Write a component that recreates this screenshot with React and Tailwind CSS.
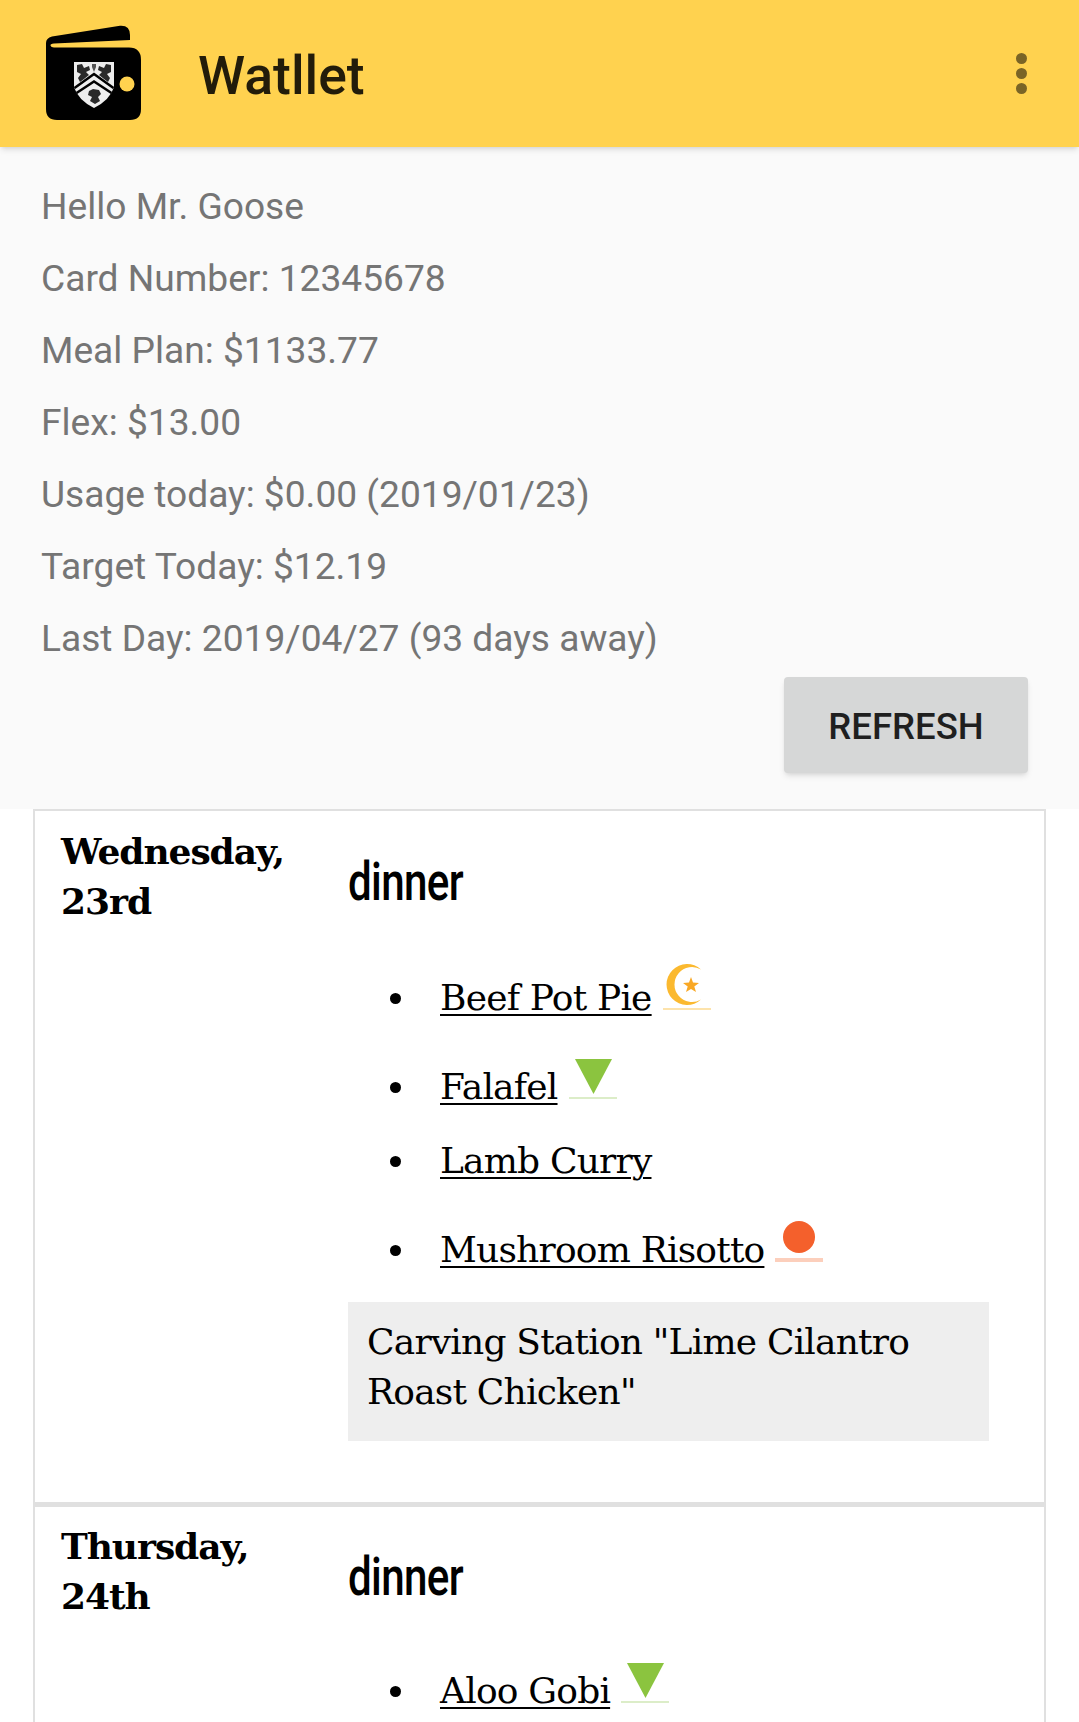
import React from 'react';

const Wallet = () => (
  <svg width="95" height="95" viewBox="0 0 95 95" className="shrink-0 mb-[2px]">
    <path d="M0 18 Q0 13 6 11.500 L74 0.700 Q84 0 84 10 L84 15 L8 18.500 Q4 19 4.500 20.500 Q5 22.500 8 22.500 L83 22.500 Q95 22.500 95 35 L95 84 Q95 95 84 95 L11 95 Q0 95 0 84 Z" fill="#000" />
    {/* crest */}
    <path d="M28 37 H68 V62 Q64 75 48 83 Q32 75 28 62 Z" fill="#eeeeee" />
    <path d="M31 40 L36 39 L38 43 L43 41 L44 45 L40 47 L43 50 L38 54 L34 57 L32 53 L35 49 L31 47 Z" fill="#2a2a2a" />
    <path d="M65 40 L60 39 L58 43 L53 41 L52 45 L56 47 L53 50 L58 54 L62 57 L64 53 L61 49 L65 47 Z" fill="#2a2a2a" />
    <path d="M46 39 H50 V42 L48 47 L46 42 Z" fill="#555" />
    <path d="M43 66 L47 64 L53 65 L55 69 L52 72 L54 76 L49 79 L44 76 L46 72 L42 70 Z" fill="#2a2a2a" />
    <path d="M28.500 63 L48 49 L67.500 63" fill="none" stroke="#000" strokeWidth="2.500" />
    <path d="M30.500 68 L48 56.500 L65.500 68" fill="none" stroke="#000" strokeWidth="2.500" />
    <circle cx="81" cy="59" r="7.500" fill="#ffd24f" />
  </svg>
);

const Moon = () => (
  <svg width="48" height="52" viewBox="0 0 48 52" className="inline-block ml-[11px] align-baseline">
    <path d="M38 11.500 A20.500 20.500 0 1 0 38 41.500 A17.500 17.500 0 1 1 38 11.500 Z" fill="#fbb92f" />
    <path d="M28 19 L30 24.500 L36 25 L31.300 28.500 L33 34 L28 31 L23 34 L24.700 28.500 L20 25 L26 24.500 Z" fill="#f9a825" />
    <rect x="0" y="50" width="48" height="2" fill="#fde3ab" />
  </svg>
);

const Veg = () => (
  <svg width="48" height="52" viewBox="0 0 48 52" className="inline-block ml-[11px] align-baseline">
    <path d="M6 12 H43 L24.500 47 Z" fill="#8bc43f" />
    <rect x="0" y="50" width="48" height="2" fill="#dcedc8" />
  </svg>
);

const Dot = () => (
  <svg width="48" height="52" viewBox="0 0 48 52" className="inline-block ml-[11px] align-baseline">
    <circle cx="24" cy="27" r="16" fill="#f4602c" />
    <rect x="0" y="48" width="48" height="4" fill="#fccfbc" />
  </svg>
);

const info = [
  'Hello Mr. Goose',
  'Card Number: 12345678',
  'Meal Plan: $1133.77',
  'Flex: $13.00',
  'Usage today: $0.00 (2019/01/23)',
  'Target Today: $12.19',
  'Last Day: 2019/04/27 (93 days away)',
];

const Meal = ({ name, icon }) => (
  <li className="relative mb-[24px] pl-[50px]">
    <span className="absolute left-0 bottom-[19px] w-[11px] h-[11px] rounded-full bg-black"></span>
    <a href="#" className="underline decoration-2 underline-offset-4">{name}</a>
    {icon}
  </li>
);

const Dinner = () => (
  <h2 className="font-['Roboto',sans-serif] font-medium text-[54px] leading-[60px] mt-[26px] origin-left scale-x-[0.78]">dinner</h2>
);

export default function App() {
  return (
    <div className="h-[1722px] overflow-hidden bg-white font-['DejaVu_Serif',serif] text-[36px] leading-[50px] tracking-[-0.8px] text-black">
      <header className="h-[147px] bg-[#ffd24f] flex items-center pl-[46px] pr-[52px] shadow-md relative tracking-normal">
        <Wallet />
        <h1 className="ml-[57px] mt-[4px] font-['Roboto',sans-serif] font-medium text-[53.500px] text-[#221c0a]">Watllet</h1>
        <div className="ml-auto flex flex-col gap-[4px]">
          <span className="w-[11px] h-[11px] rounded-full bg-[#7a6426]"></span>
          <span className="w-[11px] h-[11px] rounded-full bg-[#7a6426]"></span>
          <span className="w-[11px] h-[11px] rounded-full bg-[#7a6426]"></span>
        </div>
      </header>
      <section className="h-[662px] bg-[#fafafa] pt-[24px] pl-[41px] pr-[51px] font-['Roboto',sans-serif] text-[37.150px] tracking-normal text-[#757575]">
        {info.map((line) => (
          <p key={line} className="h-[72px] leading-[72px]">{line}</p>
        ))}
        <div className="flex justify-end mt-[2px]">
          <button className="w-[244px] h-[96px] pt-[3px] rounded bg-[#d6d7d7] shadow-md font-medium text-[36.500px] text-[#1f1f1f]">REFRESH</button>
        </div>
      </section>
      <div className="mx-[33px]">
        <div className="h-[695px] border-2 border-[#e0e0e0] flex pl-[26px] pr-[55px] pt-[15px]">
          <div className="w-[287px] font-bold shrink-0 tracking-[-1.05px]">Wednesday,<br />23rd</div>
          <div className="flex-1">
            <Dinner />
            <ul className="mt-[46px] pl-[42px]">
              <Meal name="Beef Pot Pie" icon={<Moon />} />
              <Meal name="Falafel" icon={<Veg />} />
              <Meal name="Lamb Curry" />
              <Meal name="Mushroom Risotto" icon={<Dot />} />
            </ul>
            <div className="mt-[27px] bg-[#eeeeee] h-[139px] pt-[15px] pl-[19px]">Carving Station "Lime Cilantro<br />Roast Chicken"</div>
          </div>
        </div>
        <div className="border-2 border-t-[3px] border-[#e0e0e0] flex pl-[26px] pr-[55px] pt-[14px] h-[300px]">
          <div className="w-[287px] font-bold shrink-0 tracking-[-1.05px]">Thursday,<br />24th</div>
          <div className="flex-1">
            <Dinner />
            <ul className="mt-[44px] pl-[42px]">
              <Meal name="Aloo Gobi" icon={<Veg />} />
            </ul>
          </div>
        </div>
      </div>
    </div>
  );
}
